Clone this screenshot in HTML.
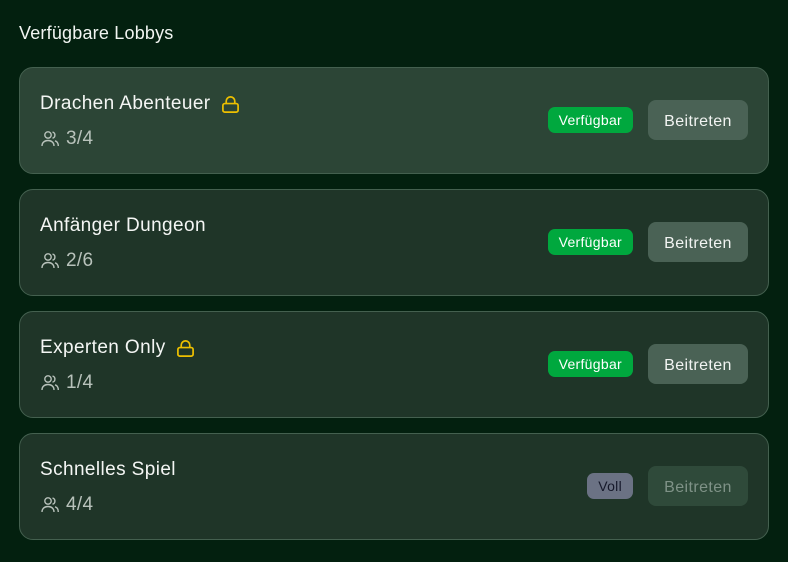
<!DOCTYPE html>
<html><head><meta charset="utf-8"><style>
body{margin:0;width:788px;height:562px;background:#03200f;font-family:"Liberation Sans",sans-serif;overflow:hidden}
h2{position:absolute;left:19px;top:23px;margin:0;font-weight:normal;font-size:18px;letter-spacing:0.2px;color:#f2f5f2}
.card{position:absolute;left:19px;width:750px;height:107px;border:1px solid #44604f;border-radius:14px;background:#1f3528;box-sizing:border-box}
.card.h{background:#2c4536}
.t{position:absolute;left:20px;top:25px;font-size:19px;letter-spacing:0.4px;color:#f4f6f4;display:flex;align-items:center}
.t svg{margin-left:10px}
.c{position:absolute;left:20px;top:60px;font-size:19px;letter-spacing:0.3px;color:#b8c2bb;display:flex;align-items:center}
.c svg{margin-right:6px}
.b{position:absolute;right:135px;top:39px;height:26px;border-radius:7px;background:#00a83e;color:#fff;font-size:14px;letter-spacing:0.3px;line-height:27px;padding:0 11px}
.b.v{background:#6b7284;color:#15182a}
.btn{position:absolute;right:20px;top:32px;width:100px;height:40px;border-radius:8px;background:#4a6255;color:#f2f4f2;font-size:16px;letter-spacing:0.4px;line-height:44px;text-align:center}
.btn.d{background:#2f4a3a;color:#7f9287}
</style></head><body>
<h2>Verfügbare Lobbys</h2>
<div class="card h" style="top:67px"><div class="t">Drachen Abenteuer<svg width="19" height="19" viewBox="0 0 20 20" fill="none" stroke="#eec000" stroke-width="1.8"><rect x="2" y="9" width="16" height="9" rx="2"/><path d="M5.5 9V6.5a4.5 4.5 0 0 1 9 0V9"/></svg></div><div class="c"><svg width="20" height="20" viewBox="0 0 20 20" fill="none" stroke="#b8c2bb" stroke-width="1.4"><circle cx="8" cy="6" r="3.2"/><path d="M2 17c0-3.5 2.6-5.5 6-5.5s6 2 6 5.5M12.5 3a3.2 3.2 0 0 1 0 6.2M15 11.8c2 .6 3.3 2.5 3.3 5.2"/></svg>3/4</div><div class="b">Verfügbar</div><div class="btn">Beitreten</div></div>
<div class="card" style="top:189px"><div class="t">Anfänger Dungeon</div><div class="c"><svg width="20" height="20" viewBox="0 0 20 20" fill="none" stroke="#b8c2bb" stroke-width="1.4"><circle cx="8" cy="6" r="3.2"/><path d="M2 17c0-3.5 2.6-5.5 6-5.5s6 2 6 5.5M12.5 3a3.2 3.2 0 0 1 0 6.2M15 11.8c2 .6 3.3 2.5 3.3 5.2"/></svg>2/6</div><div class="b">Verfügbar</div><div class="btn">Beitreten</div></div>
<div class="card" style="top:311px"><div class="t">Experten Only<svg width="19" height="19" viewBox="0 0 20 20" fill="none" stroke="#eec000" stroke-width="1.8"><rect x="2" y="9" width="16" height="9" rx="2"/><path d="M5.5 9V6.5a4.5 4.5 0 0 1 9 0V9"/></svg></div><div class="c"><svg width="20" height="20" viewBox="0 0 20 20" fill="none" stroke="#b8c2bb" stroke-width="1.4"><circle cx="8" cy="6" r="3.2"/><path d="M2 17c0-3.5 2.6-5.5 6-5.5s6 2 6 5.5M12.5 3a3.2 3.2 0 0 1 0 6.2M15 11.8c2 .6 3.3 2.5 3.3 5.2"/></svg>1/4</div><div class="b">Verfügbar</div><div class="btn">Beitreten</div></div>
<div class="card" style="top:433px"><div class="t">Schnelles Spiel</div><div class="c"><svg width="20" height="20" viewBox="0 0 20 20" fill="none" stroke="#b8c2bb" stroke-width="1.4"><circle cx="8" cy="6" r="3.2"/><path d="M2 17c0-3.5 2.6-5.5 6-5.5s6 2 6 5.5M12.5 3a3.2 3.2 0 0 1 0 6.2M15 11.8c2 .6 3.3 2.5 3.3 5.2"/></svg>4/4</div><div class="b v">Voll</div><div class="btn d">Beitreten</div></div>
</body></html>
